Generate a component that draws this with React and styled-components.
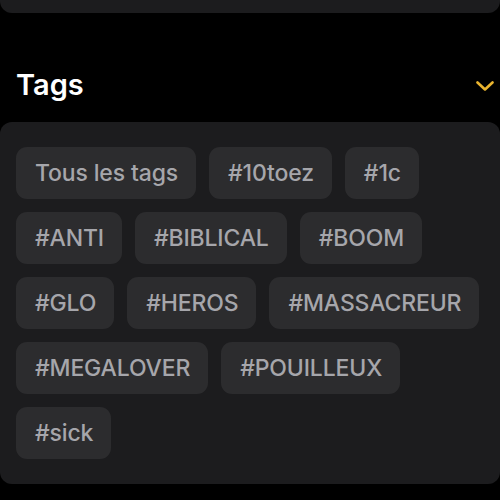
import styled, { createGlobalStyle } from "styled-components";

const GlobalStyle = createGlobalStyle`
  html, body {
    margin: 0;
    padding: 0;
    background: #000;
  }
  body {
    width: 500px;
    height: 500px;
    overflow: hidden;
    font-family: Inter, "Noto Sans", sans-serif;
    -webkit-font-smoothing: antialiased;
  }
`;

const Page = styled.div`
  display: flex;
  flex-direction: column;
  width: 500px;
  height: 500px;
  background: #000;
`;

const TopPanel = styled.div`
  height: 13px;
  background: #1c1c1e;
  border-radius: 0 0 12px 12px;
`;

const SectionHeader = styled.div`
  display: flex;
  align-items: center;
  justify-content: space-between;
  height: 109px;
  padding: 34px 6px 0 16px;
  box-sizing: border-box;
`;

const Title = styled.h2`
  margin: 0;
  font-size: 29px;
  font-weight: 600;
  color: #fff;
`;

const Chevron = styled.svg`
  width: 18px;
  height: 10px;
  margin-top: 3px;
`;

const Panel = styled.div`
  display: flex;
  flex-wrap: wrap;
  align-content: flex-start;
  gap: 13px;
  padding: 25px 14px 25px 16px;
  background: #1c1c1e;
  border-radius: 12px;
`;

const Chip = styled.button`
  height: 52px;
  padding: 0 18px 0 19px;
  border: none;
  border-radius: 11px;
  background: #2c2c2e;
  color: #a6a6ab;
  font-family: Inter, "Noto Sans", sans-serif;
  font-size: 23px;
  font-weight: 500;
  letter-spacing: -0.15px;
  cursor: pointer;
`;

const tags = [
  "Tous les tags",
  "#10toez",
  "#1c",
  "#ANTI",
  "#BIBLICAL",
  "#BOOM",
  "#GLO",
  "#HEROS",
  "#MASSACREUR",
  "#MEGALOVER",
  "#POUILLEUX",
  "#sick",
];

export default function App() {
  return (
    <>
      <GlobalStyle />
      <Page>
        <TopPanel />
        <SectionHeader>
          <Title>Tags</Title>
          <Chevron viewBox="0 0 18 10" fill="none">
            <path
              d="M1.5 1.5 L9 8.5 L16.5 1.5"
              stroke="#e9b42f"
              strokeWidth="2.6"
              strokeLinecap="round"
              strokeLinejoin="round"
            />
          </Chevron>
        </SectionHeader>
        <Panel>
          {tags.map((tag) => (
            <Chip key={tag}>{tag}</Chip>
          ))}
        </Panel>
      </Page>
    </>
  );
}
